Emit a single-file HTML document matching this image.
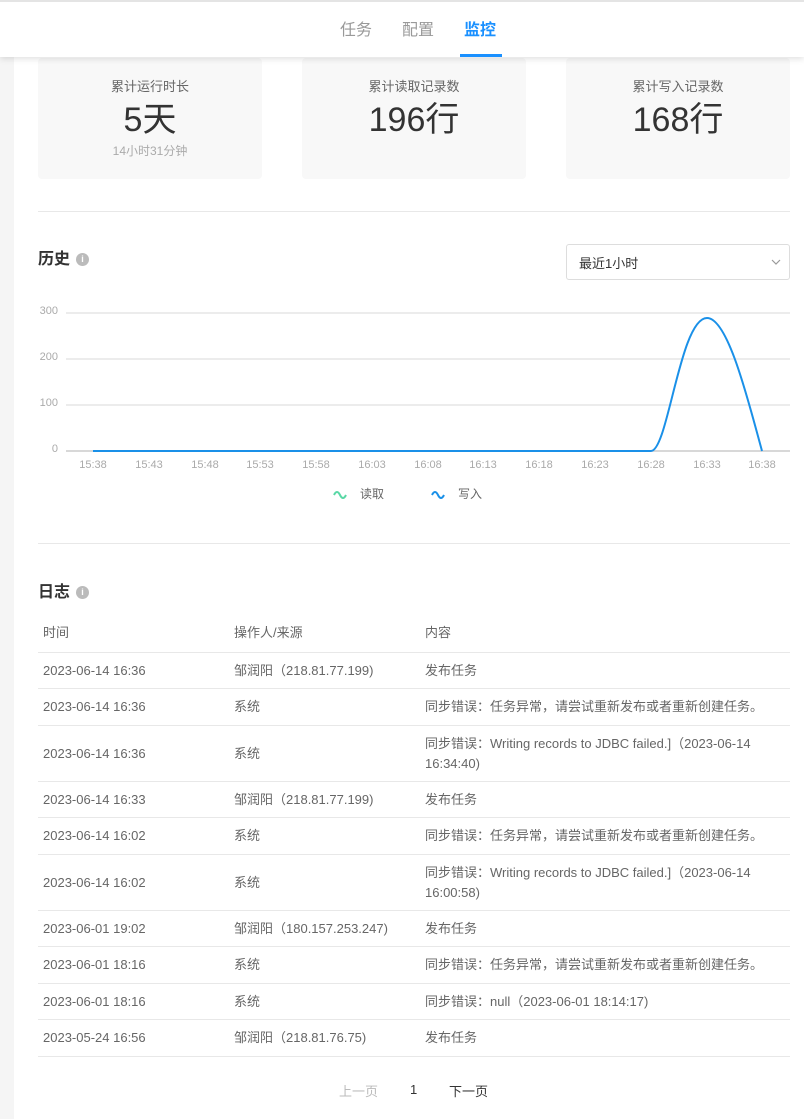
<!DOCTYPE html><html><head><meta charset="utf-8"><style>
*{margin:0;padding:0;box-sizing:border-box}
body{width:804px;height:1119px;overflow:hidden;background:#fff;font-family:"Liberation Sans","Noto Sans CJK SC",sans-serif;position:relative;color:#666}
.gut{position:absolute;left:0;top:0;width:14px;height:1119px;background:#f5f5f5}
.hdr{position:absolute;left:0;top:0;width:804px;height:57px;background:#fff;border-top:2px solid #e4e4e4;box-shadow:0 2px 6px rgba(0,0,0,.12);z-index:2}
.tab{position:absolute;top:14px;font-size:16px;color:#999}
.card{position:absolute;top:58px;width:224px;height:121px;background:#f8f8f8;border-radius:4px;text-align:center}
.card .t{margin-top:18px;font-size:13px;color:#666}
.card .v{font-size:34px;color:#333;margin-top:5px;line-height:40px}
.card .s{font-size:12px;color:#aaa;margin-top:2px}
.hr{position:absolute;left:38px;width:752px;height:1px;background:#e8e8e8}
.h2{position:absolute;left:38px;font-size:16px;font-weight:bold;color:#333}
.i{display:inline-block;width:13px;height:13px;border-radius:50%;background:#bbb;color:#fff;font-size:9px;text-align:center;line-height:13px;vertical-align:2px;margin-left:6px;font-weight:bold}
.row{position:absolute;left:38px;width:752px;border-bottom:1px solid #e8e8e8;font-size:13px;color:#666}
.row span{position:absolute;top:50%;transform:translateY(-50%);line-height:20px}
.c1{left:5px}.c2{left:196px}.c3{left:387px;width:360px}
</style></head><body>
<div class="gut"></div>
<div class="hdr">
<div class="tab" style="left:340px">任务</div>
<div class="tab" style="left:402px">配置</div>
<div class="tab" style="left:464px;color:#1a90ff;font-weight:bold">监控</div>
<div style="position:absolute;left:460px;top:52px;width:42px;height:3px;background:#1a90ff"></div>
</div>
<div class="card" style="left:38px"><div class="t">累计运行时长</div><div class="v">5天</div><div class="s">14小时31分钟</div></div>
<div class="card" style="left:302px"><div class="t">累计读取记录数</div><div class="v">196行</div></div>
<div class="card" style="left:566px"><div class="t">累计写入记录数</div><div class="v">168行</div></div>
<div class="hr" style="top:211px"></div>
<div class="h2" style="top:245px">历史<span class="i">i</span></div>
<div style="position:absolute;left:566px;top:244px;width:224px;height:36px;border:1px solid #ddd;border-radius:3px;font-size:13px;color:#333;padding:8px 12px">最近1小时<svg style="position:absolute;right:8px;top:14px" width="10" height="7"><path d="M1,1 L5,5 L9,1" fill="none" stroke="#999" stroke-width="1.2"/></svg></div>
<svg style="position:absolute;left:0;top:290px" width="804" height="230" font-family="Liberation Sans" font-size="11" fill="#aaa">
<g stroke="#e6e6e6" stroke-width="1.5"><line x1="66" y1="23" x2="790" y2="23"/><line x1="66" y1="69" x2="790" y2="69"/><line x1="66" y1="115" x2="790" y2="115"/><line x1="66" y1="161" x2="790" y2="161" stroke="#ccc"/></g>
<text x="58" y="24" text-anchor="end">300</text><text x="58" y="70" text-anchor="end">200</text><text x="58" y="116" text-anchor="end">100</text><text x="58" y="162" text-anchor="end">0</text>
<g text-anchor="middle"><text x="93" y="178">15:38</text><text x="149" y="178">15:43</text><text x="205" y="178">15:48</text><text x="260" y="178">15:53</text><text x="316" y="178">15:58</text><text x="372" y="178">16:03</text><text x="428" y="178">16:08</text><text x="483" y="178">16:13</text><text x="539" y="178">16:18</text><text x="595" y="178">16:23</text><text x="651" y="178">16:28</text><text x="707" y="178">16:33</text><text x="762" y="178">16:38</text></g>
<path d="M93,161 H651 C668,161 680,28 707,28 C728,28 748,110 762,161" fill="none" stroke="#1a90e8" stroke-width="2"/>
<path d="M334,205 q3,-6 6,0 t6,0" fill="none" stroke="#5ad8a6" stroke-width="2"/>
<text x="360" y="208" fill="#666" font-size="12">读取</text>
<path d="M432,205 q3,-6 6,0 t6,0" fill="none" stroke="#1a90e8" stroke-width="2"/>
<text x="458" y="208" fill="#666" font-size="12">写入</text>
</svg>
<div class="hr" style="top:543px"></div>
<div class="h2" style="top:578px">日志<span class="i">i</span></div>
<div class="row" style="top:614px;height:39px"><span class="c1">时间</span><span class="c2">操作人/来源</span><span class="c3">内容</span></div>
<div class="row" style="top:653px;height:36px"><span class="c1">2023-06-14 16:36</span><span class="c2">邹润阳（218.81.77.199)</span><span class="c3">发布任务</span></div>
<div class="row" style="top:689px;height:37px"><span class="c1">2023-06-14 16:36</span><span class="c2">系统</span><span class="c3">同步错误：任务异常，请尝试重新发布或者重新创建任务。</span></div>
<div class="row" style="top:726px;height:56px"><span class="c1">2023-06-14 16:36</span><span class="c2">系统</span><span class="c3">同步错误：Writing records to JDBC failed.]（2023-06-14 16:34:40)</span></div>
<div class="row" style="top:782px;height:36px"><span class="c1">2023-06-14 16:33</span><span class="c2">邹润阳（218.81.77.199)</span><span class="c3">发布任务</span></div>
<div class="row" style="top:818px;height:37px"><span class="c1">2023-06-14 16:02</span><span class="c2">系统</span><span class="c3">同步错误：任务异常，请尝试重新发布或者重新创建任务。</span></div>
<div class="row" style="top:855px;height:56px"><span class="c1">2023-06-14 16:02</span><span class="c2">系统</span><span class="c3">同步错误：Writing records to JDBC failed.]（2023-06-14 16:00:58)</span></div>
<div class="row" style="top:911px;height:36px"><span class="c1">2023-06-01 19:02</span><span class="c2">邹润阳（180.157.253.247)</span><span class="c3">发布任务</span></div>
<div class="row" style="top:947px;height:37px"><span class="c1">2023-06-01 18:16</span><span class="c2">系统</span><span class="c3">同步错误：任务异常，请尝试重新发布或者重新创建任务。</span></div>
<div class="row" style="top:984px;height:36px"><span class="c1">2023-06-01 18:16</span><span class="c2">系统</span><span class="c3">同步错误：null（2023-06-01 18:14:17)</span></div>
<div class="row" style="top:1020px;height:37px"><span class="c1">2023-05-24 16:56</span><span class="c2">邹润阳（218.81.76.75)</span><span class="c3">发布任务</span></div>
<div style="position:absolute;top:1081px;left:339px;font-size:13px;color:#bbb">上一页</div>
<div style="position:absolute;top:1082px;left:410px;font-size:13px;color:#333">1</div>
<div style="position:absolute;top:1081px;left:449px;font-size:13px;color:#333">下一页</div>
</body></html>
